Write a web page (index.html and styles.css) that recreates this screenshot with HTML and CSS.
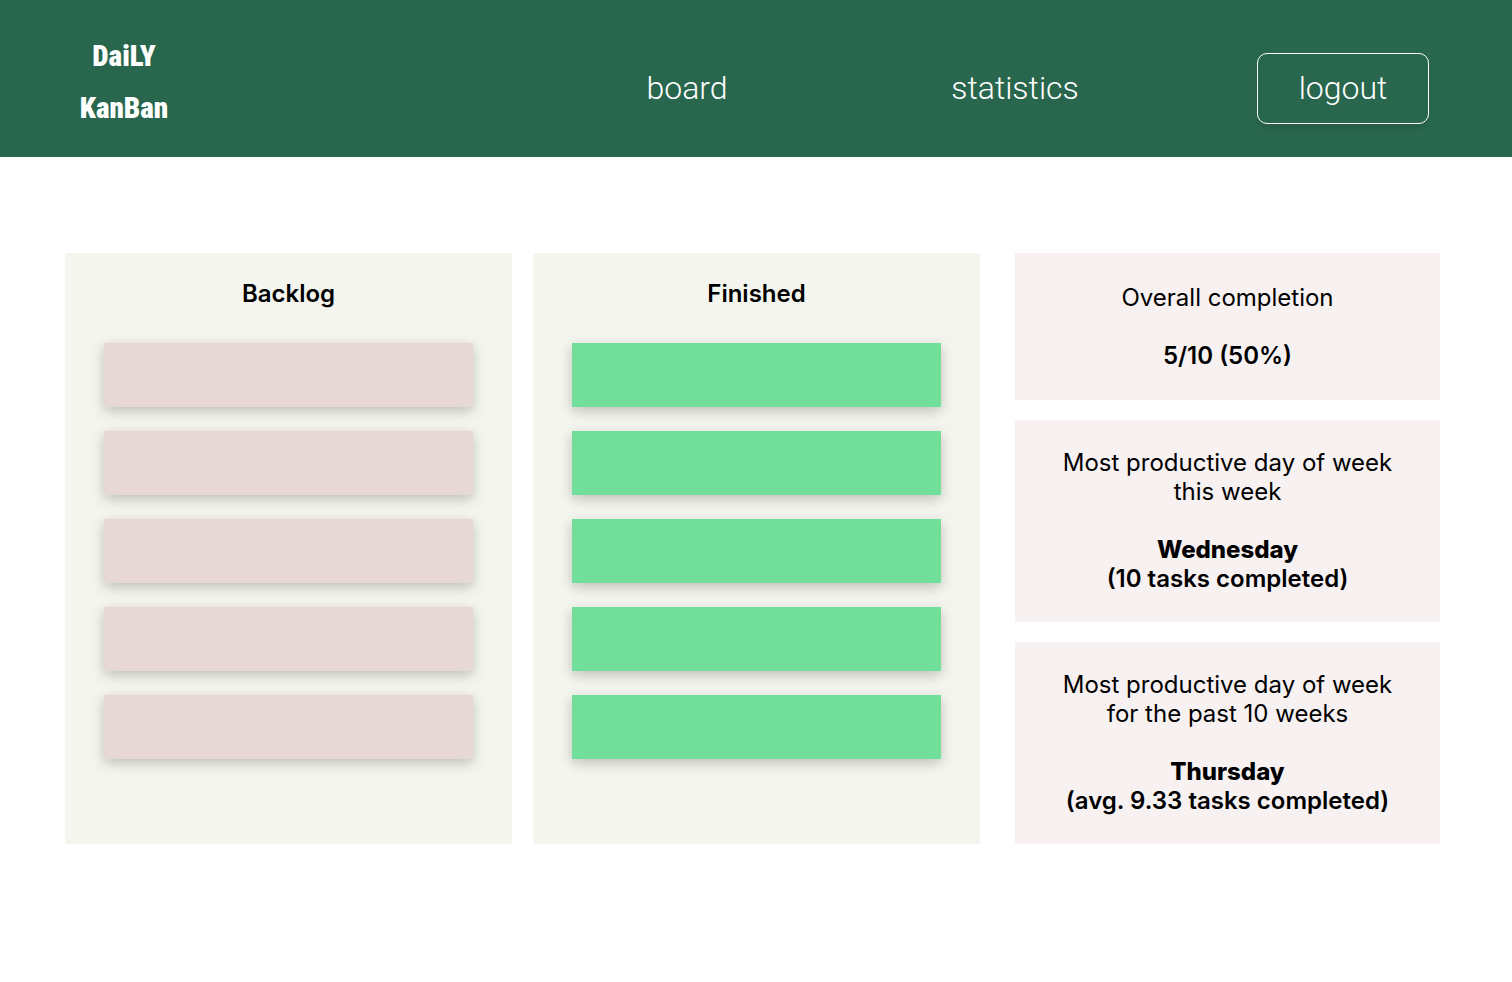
FILE: index.html
```html
<!DOCTYPE html>
<html lang="en">
<head>
<meta charset="utf-8">
<meta name="viewport" content="width=device-width, initial-scale=1">
<title>Daily Kanban – Statistics</title>
<link rel="stylesheet" href="styles.css">
</head>
<body>
<header class="header">
  <a class="logo" href="#"><span>DaiLY</span> <span>KanBan</span></a>
  <nav class="nav">
    <a class="nav-link" href="#board">board</a>
    <a class="nav-link" href="#statistics">statistics</a>
    <button class="logout" type="button">logout</button>
  </nav>
</header>
<main class="main">
  <section class="column backlog">
    <h2 class="column-title">Backlog</h2>
    <ul class="tasks">
      <li class="task"></li>
      <li class="task"></li>
      <li class="task"></li>
      <li class="task"></li>
      <li class="task"></li>
    </ul>
  </section>
  <section class="column finished">
    <h2 class="column-title">Finished</h2>
    <ul class="tasks">
      <li class="task"></li>
      <li class="task"></li>
      <li class="task"></li>
      <li class="task"></li>
      <li class="task"></li>
    </ul>
  </section>
  <aside class="stats">
    <section class="stat overall">
      <p class="stat-label">Overall completion</p>
      <p class="stat-value">5/10 (50%)</p>
    </section>
    <section class="stat">
      <p class="stat-label">Most productive day of week<br>this week</p>
      <p class="stat-value"><strong>Wednesday</strong><br>(10 tasks completed)</p>
    </section>
    <section class="stat">
      <p class="stat-label">Most productive day of week<br>for the past 10 weeks</p>
      <p class="stat-value"><strong>Thursday</strong><br>(avg. 9.33 tasks completed)</p>
    </section>
  </aside>
</main>
</body>
</html>
```
FILE: styles.css
```css
* {
  box-sizing: border-box;
}

body {
  margin: 0;
  background: #fff;
  color: #000;
  font-family: Inter, "Liberation Sans", sans-serif;
  font-size: 24px;
  line-height: 29px;
}

.header {
  display: grid;
  grid-template-columns: 523fr 984fr;
  align-items: end;
  padding: 30px 5px 23px 0;
  background: #28664d;
  color: #fff;
}

.logo {
  display: flex;
  flex-direction: column;
  align-items: center;
  width: 248px;
  color: inherit;
  font-family: "Roboto Condensed", Roboto, sans-serif;
  font-size: 29px;
  font-weight: 900;
  line-height: 52px;
  text-decoration: none;
}

.nav {
  display: grid;
  grid-template-columns: repeat(3, 1fr);
  align-items: center;
  justify-items: center;
  margin-bottom: 10px;
  font-family: Roboto, "Liberation Sans", sans-serif;
  font-size: 32px;
  font-weight: 300;
  line-height: 41px;
}

.nav-link {
  color: inherit;
  text-decoration: none;
}

.logout {
  padding: 14px 41px;
  border: 1px solid #fff;
  border-radius: 10px;
  background: #28664d;
  box-shadow: 0 4px 4px rgba(0, 0, 0, 0.08);
  color: inherit;
  font: inherit;
  cursor: pointer;
}

.main {
  display: grid;
  grid-template-columns: 447fr 447fr 439fr;
  column-gap: 21px;
  padding: 96px 72px 96px 65px;
}

.column {
  padding: 26px 39px 85px;
  background: #f3f5ee;
}

.column-title {
  margin: 0 0 35px;
  font-size: 24px;
  font-weight: 600;
  line-height: 29px;
  text-align: center;
}

.tasks {
  display: grid;
  row-gap: 24px;
  margin: 0;
  padding: 0;
  list-style: none;
}

.task {
  height: 64px;
  box-shadow: 0 4px 12px rgba(0, 0, 0, 0.22);
}

.backlog .task {
  background: #e8d7d7;
}

.finished .task {
  background: #71df9a;
}

.stats {
  display: flex;
  flex-direction: column;
  gap: 20px;
  padding-left: 14px;
}

.stat {
  display: flex;
  flex-direction: column;
  gap: 29px;
  padding: 28px 16px 29px;
  background: #f7f1f1;
  text-align: center;
}

.overall {
  padding: 30px 16px;
}

.stat-label,
.stat-value {
  margin: 0;
}

.stat-label {
  font-weight: 400;
}

.stat-value {
  font-weight: 600;
}

.stat-value strong {
  font-weight: 800;
}
```
